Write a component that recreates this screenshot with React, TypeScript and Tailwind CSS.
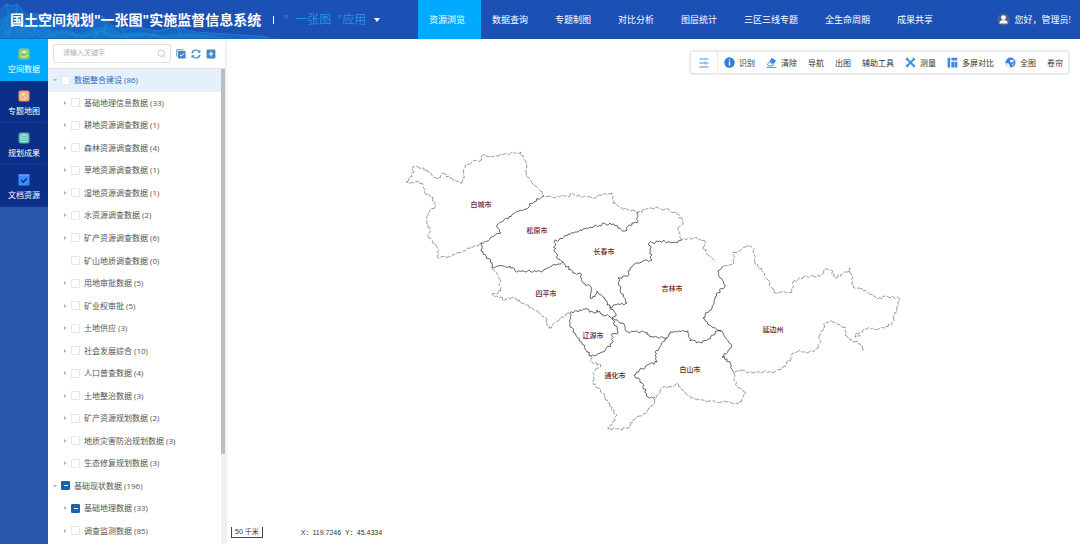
import { useState } from "react";

type TNode = {
  name: string;
  count: number;
  level: 0 | 1;
  leaf?: boolean;
  open?: boolean;
  partial?: boolean;
};

type TPoint = [number, number];

const navItems = [
  "资源浏览",
  "数据查询",
  "专题制图",
  "对比分析",
  "图层统计",
  "三区三线专题",
  "全生命周期",
  "成果共享",
];

const treeNodes: TNode[] = [
  { name: "数据整合建设", count: 86, level: 0, open: true },
  { name: "基础地理信息数据", count: 33, level: 1 },
  { name: "耕地资源调查数据", count: 1, level: 1 },
  { name: "森林资源调查数据", count: 4, level: 1 },
  { name: "草地资源调查数据", count: 1, level: 1 },
  { name: "湿地资源调查数据", count: 1, level: 1 },
  { name: "水资源调查数据", count: 2, level: 1 },
  { name: "矿产资源调查数据", count: 6, level: 1 },
  { name: "矿山地质调查数据", count: 0, level: 1, leaf: true },
  { name: "用地审批数据", count: 5, level: 1 },
  { name: "矿业权审批", count: 5, level: 1 },
  { name: "土地供应", count: 3, level: 1 },
  { name: "社会发展综合", count: 10, level: 1 },
  { name: "人口普查数据", count: 4, level: 1 },
  { name: "土地整治数据", count: 3, level: 1 },
  { name: "矿产资源规划数据", count: 2, level: 1 },
  { name: "地质灾害防治规划数据", count: 3, level: 1 },
  { name: "生态修复规划数据", count: 3, level: 1 },
  { name: "基础现状数据", count: 196, level: 0, open: true, partial: true },
  { name: "基础地理数据", count: 33, level: 1, partial: true },
  { name: "调查监测数据", count: 85, level: 1 },
];

// province outline, drawn light
const outerLines = [
  "406,182 410,177 414,172 412,168 415,167 422,168 428,172 437,179 440,178 443,173 450,178 462,183 464,173 465,165 472,162 480,161 483,155 497,156 510,154 521,152 523,158 527,167 526,175 533,184 543,192 544,196 552,197 558,196 568,197 572,193 577,196 587,197 597,198 599,195 612,193 613,203 622,208 637,212 645,210 657,207 670,211 678,214 683,223 678,230 681,239 693,238 705,240 706,243 703,247 708,255 715,262",
  "722,267 734,263 733,252 740,251 748,245 753,248 755,262 763,272 768,280 774,293 792,292 793,282 803,277 820,276 825,269 831,270 835,278 847,272 850,268 853,287 867,292 878,299 887,296 899,298 897,308 892,323 885,328 867,329 855,334 855,337 861,336",
  "864,350 860,344 852,340 845,335 845,327 833,322 826,322 821,333 818,348 808,353 800,350 793,353 791,359 782,368 774,372 755,372 733,371",
  "733,371 737,386 746,393 743,398 738,404 727,402 710,401 693,398 685,393 677,383 672,387 663,387 657,395 653,405 643,415 633,420 628,428 620,429 608,429",
  "481,243 463,251 450,257 438,258 437,247 429,238 430,230 427,222 428,213 435,207 433,197 425,193 422,183 412,182 406,182",
  "492,267 500,280 501,291 492,294 505,300 513,297 520,302 533,309 545,317 549,328 560,319 570,313",
  "591,356 592,362 601,365 594,372 593,382 602,393 610,407 617,415 608,429",
];

// borders between the cities, drawn dark
const innerLines = [
  "544,196 529,204 529,207 520,210 497,225 501,233 481,243 481,251 492,263 492,267",
  "492,267 510,266 515,271 543,271 552,266 563,262",
  "563,262 558,259 555,252 554,242 568,234 577,232 590,227 610,223 625,231 632,223 637,223 637,212",
  "563,262 573,273 580,273 583,283 591,287 590,298 595,297 597,291 605,300 610,307",
  "610,307 627,303 620,290 618,278 628,276 630,268 638,263 652,260 649,243 660,241 677,243 682,240",
  "610,307 616,316 612,318 622,323 628,332 647,332 650,337 667,338 670,332 688,331 690,341 702,343 708,339 717,331 721,331",
  "570,313 573,313 585,309 595,313 597,310 602,314 610,317 613,320 618,333 612,334 612,343 603,352 591,356 587,352 582,343 575,333 570,327 570,313",
  "667,338 655,352 657,362 647,365 634,375 642,383 648,397 655,397",
  "722,267 718,272 725,285 715,297 712,308 703,318 710,325 722,331 732,347 722,357 727,359 733,371",
];

const cities = [
  { name: "白城市", x: 481, y: 204 },
  { name: "松原市", x: 537, y: 230 },
  { name: "长春市", x: 604, y: 251 },
  { name: "吉林市", x: 672, y: 288 },
  { name: "四平市", x: 546, y: 293 },
  { name: "延边州", x: 773, y: 329 },
  { name: "辽源市", x: 593, y: 335 },
  { name: "通化市", x: 615, y: 375 },
  { name: "白山市", x: 690, y: 369 },
];

// splits each segment and shifts the points a little so borders look surveyed
const roughen = (line: string) => {
  const points = line.split(" ").map((p) => p.split(",").map(Number) as TPoint);
  let path = `M${points[0].join(" ")}`;
  for (let i = 1; i < points.length; i++) {
    const [x1, y1] = points[i - 1];
    const [x2, y2] = points[i];
    const length = Math.hypot(x2 - x1, y2 - y1);
    const steps = Math.max(1, Math.round(length / 1.8));
    for (let s = 1; s < steps; s++) {
      const t = s / steps;
      const noise = Math.sin(x1 * 12.9 + y1 * 78.2 + s * 137.7) * 43758.5;
      const shift = (noise - Math.floor(noise) - 0.5) * 2.8;
      const x = x1 + (x2 - x1) * t - ((y2 - y1) / length) * shift;
      const y = y1 + (y2 - y1) * t + ((x2 - x1) / length) * shift;
      path += `L${x.toFixed(1)} ${y.toFixed(1)}`;
    }
    path += `L${x2} ${y2}`;
  }
  return path;
};

const ProvinceMap = () => (
  <svg viewBox="225 39 855 505" className="absolute inset-0 h-full w-full">
    <g fill="none" stroke="#55555f" strokeWidth="0.6" strokeDasharray="6 1 4 1.5">
      {outerLines.map((line) => (
        <path key={line} d={roughen(line)} />
      ))}
    </g>
    <g fill="none" stroke="#222" strokeWidth="0.7">
      {innerLines.map((line) => (
        <path key={line} d={roughen(line)} />
      ))}
    </g>
    <g fill="#6b1c1c" fontSize="7" fontWeight="500" textAnchor="middle">
      {cities.map((city) => (
        <text key={city.name} x={city.x} y={city.y + 3}>
          {city.name}
        </text>
      ))}
    </g>
  </svg>
);

const Mountains = () => (
  <svg
    viewBox="0 0 280 39"
    preserveAspectRatio="none"
    className="absolute left-0 top-0 h-full w-[280px]"
    fill="none"
  >
    <path d="M0 10L6 4L12 6L17 4L23 11L29 16L35 13L42 17L48 15L54 22L62 26L72 22L84 27L94 20L102 16L110 24L122 29L140 27L156 31L176 27L196 32L226 34L268 37L280 39H0Z" fill="#1467c4" />
    <path d="M0 20L8 14L15 20L22 17L30 27L42 23L52 31L66 29L78 34L96 28L108 25L120 33L142 32L164 35L190 33L232 38H0Z" fill="#1478cf" />
    <g stroke="#2e9be0" strokeWidth="0.7" opacity="0.7">
      <path d="M0 10L6 4L12 6L17 4L23 11L29 16L35 13L42 17L48 15L54 22L62 26L72 22L84 27L94 20L102 16L110 24L122 29L140 27L156 31L176 27L196 32L226 34L268 37" />
      <path d="M6 4L9 15L5 22L11 31L8 38M17 4L16 13L22 20L20 30L27 38M35 13L38 22L34 30L41 38M48 15L51 25L48 33L56 38M72 22L70 29L77 38M94 20L92 27L97 32L95 38M102 16L106 26L104 32L111 38M122 29L127 38M156 31L151 38M176 27L181 34L178 38" />
      <path d="M0 29L4 26L7 34L14 25L19 35L25 27L32 36L38 31L46 37L62 32L84 37L101 31L118 37L146 34L168 38" />
    </g>
  </svg>
);

const SpaceIcon = () => (
  <svg viewBox="0 0 12 12" className="size-3">
    <rect x="0.5" y="0.5" width="11" height="11" rx="2" fill="#8cc97b" />
    <path d="M2.5 4L6 2.5L9.5 4L6 5.5Z" fill="#e8f3a8" />
    <path d="M2.5 6L5 7.5L9.5 5.5V8.5L6 10L2.5 8.5Z" fill="#d5e77d" />
    <path d="M3 8L5 6.5L6.5 8L9 6" stroke="#4e9d62" strokeWidth="0.8" fill="none" />
  </svg>
);

const ThemeIcon = () => (
  <svg viewBox="0 0 12 12" className="size-3">
    <rect x="0.5" y="0.5" width="11" height="11" rx="2" fill="#efa16c" />
    <circle cx="6" cy="6.2" r="3.4" fill="none" stroke="#ffe6cf" />
    <path d="M4 3L6 6.5L8 8M6 6.5V3.5" stroke="#fff1e4" fill="none" />
  </svg>
);

const ResultIcon = () => (
  <svg viewBox="0 0 12 12" className="size-3">
    <rect x="0.5" y="0.5" width="11" height="11" rx="2.5" fill="#57b9ad" />
    <rect x="3" y="3" width="6" height="6.5" rx="1" fill="none" stroke="#d5f3ec" strokeWidth="0.9" />
    <path d="M4.5 2.5H7.5M4.3 5.3H7.7M4.3 7.3H7.7" stroke="#d5f3ec" strokeWidth="0.9" />
  </svg>
);

const DocIcon = () => (
  <svg viewBox="0 0 12 12" className="size-3">
    <rect x="0.5" y="0.5" width="11" height="11" rx="0.5" fill="#3b8cf5" />
    <path d="M0.5 1H11.5" stroke="#79b3ff" />
    <path d="M3 6L5.3 8.3L9 4.3" stroke="#0c2d80" strokeWidth="1.3" fill="none" />
  </svg>
);

const sideItems = [
  { name: "空间数据", icon: <SpaceIcon /> },
  { name: "专题地图", icon: <ThemeIcon /> },
  { name: "规划成果", icon: <ResultIcon /> },
  { name: "文档资源", icon: <DocIcon /> },
];

const InfoIcon = () => (
  <svg viewBox="0 0 11 11" className="size-[11px]">
    <circle cx="5.5" cy="5.5" r="5.2" fill="#2f7fd6" />
    <path d="M5.5 4.6V8.4M5.5 2.3V3.6" stroke="#fff" strokeWidth="1.3" />
  </svg>
);

const EraserIcon = () => (
  <svg viewBox="0 0 11 11" className="size-[11px]">
    <path d="M5.6 0.8L10 3.6L7.8 7L3.6 4.2Z" fill="#3d87d8" />
    <path d="M3.3 4.8L7.3 7.5L6.4 8.9H3L1.3 7.7Z" fill="none" stroke="#3d87d8" strokeWidth="0.9" />
    <path d="M0.3 10.4H10.5" stroke="#3d87d8" strokeWidth="0.9" />
  </svg>
);

const MeasureIcon = () => (
  <svg viewBox="0 0 11 11" className="size-[11px]" fill="none" stroke="#4490e0">
    <path d="M1.8 1.8L9.2 9.2M9.2 1.8L1.8 9.2" strokeWidth="2" />
    <path d="M0.8 3L3 0.8M8 0.8L10.2 3M0.8 8L3 10.2M8 10.2L10.2 8" strokeWidth="1.3" />
  </svg>
);

const SplitIcon = () => (
  <svg viewBox="0 0 11 11" className="size-[11px]" fill="#3b86de">
    <path d="M0.6 0.8H3.2V10.4H0.6ZM4.4 0.8H10.3V3.6H4.4ZM4.4 4.8H10.3V10.4H4.4Z" />
    <path d="M7.4 4.8V10.4" stroke="#fff" strokeWidth="0.5" />
  </svg>
);

const GlobeIcon = () => (
  <svg viewBox="0 0 11 11" className="size-[11px]">
    <circle cx="5.5" cy="5.5" r="5" fill="#3b86de" />
    <path d="M4.8 3.4L8.8 2.6L8.2 5L5.6 5.6ZM0.6 6.2L3.8 6.4L5.4 10.2L2.8 9.8Z" fill="#fff" />
    <path d="M6.6 7L9.3 6.2L7.8 8.8Z" fill="#bcd9f8" />
  </svg>
);

const tools = [
  { name: "识别", icon: <InfoIcon /> },
  { name: "清除", icon: <EraserIcon /> },
  { name: "导航" },
  { name: "出图" },
  { name: "辅助工具" },
  { name: "测量", icon: <MeasureIcon /> },
  { name: "多屏对比", icon: <SplitIcon /> },
  { name: "全图", icon: <GlobeIcon /> },
  { name: "卷帘" },
];

const Header = () => {
  const [active, setActive] = useState("资源浏览");

  return (
    <header className="relative flex h-[39px] shrink-0 items-center bg-[#1b50b5] text-white">
      <Mountains />
      <div className="relative flex w-[418px] shrink-0 items-center whitespace-nowrap pl-[10px]">
        <h1 className="text-[14px] font-bold leading-5">国土空间规划"一张图"实施监督信息系统</h1>
        <span className="ml-3 h-2 w-px bg-white" />
        <button className="ml-[10px] flex items-center gap-2 text-[12px] leading-5 text-[#2590ea]">
          <span className="whitespace-pre">"  一张图  "应用</span>
          <span className="border-x-[3px] border-t-4 border-x-transparent border-t-white" />
        </button>
      </div>
      <nav className="flex h-full whitespace-nowrap">
        {navItems.map((item) => (
          <button
            key={item}
            onClick={() => setActive(item)}
            className={`h-full pl-[11px] pr-4 text-[9px] ${active === item ? "bg-[#00aaff]" : ""}`}
          >
            {item}
          </button>
        ))}
      </nav>
      <div className="ml-auto flex items-center gap-[5px] whitespace-nowrap pr-[9px] text-[9px]">
        <svg viewBox="0 0 13 13" className="size-[13px]">
          <circle cx="6.5" cy="6.5" r="6.3" fill="#4b6290" />
          <circle cx="6.5" cy="4.6" r="2.4" fill="#fff" />
          <path d="M2.4 10.4C2.4 7.6 4.3 7.2 6.5 7.2S10.6 7.6 10.6 10.4Z" fill="#fff" />
        </svg>
        <span>您好，管理员!</span>
      </div>
    </header>
  );
};

const SideMenu = () => {
  const [active, setActive] = useState("空间数据");

  return (
    <aside className="w-12 shrink-0 bg-[#2a56ae] text-white">
      {sideItems.map((item) => (
        <button
          key={item.name}
          onClick={() => setActive(item.name)}
          className={`flex h-[42px] w-full flex-col items-center justify-center gap-1 pt-[2px] text-[8px] leading-[10px] ${
            active === item.name ? "bg-[#00aaff]" : "border-b border-[#12398f] bg-[#0b2f88]"
          }`}
        >
          {item.icon}
          {item.name}
        </button>
      ))}
    </aside>
  );
};

const TreeRow = ({ node, selected }: { node: TNode; selected: boolean }) => (
  <li
    className={`flex min-h-[22px] flex-1 items-center text-[8px] ${
      node.level === 0 ? "pl-[5px]" : "pl-[15px]"
    } ${selected ? "bg-[#e6effc] text-[#2a6cb5]" : "text-[#555]"}`}
  >
    <span className="flex w-2 shrink-0 items-center">
      {!node.leaf && (
        <svg viewBox="0 0 4 4" className="size-1" fill="#b5b5b5">
          <path d={node.open ? "M0 1H4L2 3.5Z" : "M1 0L3.5 2L1 4Z"} />
        </svg>
      )}
    </span>
    <label className="flex items-center gap-1 whitespace-nowrap">
      <input
        type="checkbox"
        defaultChecked={node.partial}
        className="flex size-[9px] appearance-none items-center justify-center rounded-[1px] border border-[#e6e6e6] bg-white checked:border-[#1763ac] checked:bg-[#1763ac] checked:after:h-px checked:after:w-1 checked:after:bg-white checked:after:content-['']"
      />
      <span>
        {node.name} ({node.count})
      </span>
    </label>
  </li>
);

const LayerPanel = () => (
  <section className="z-10 flex w-[177px] shrink-0 flex-col bg-white shadow-[1px_0_3px_rgba(0,0,0,0.12)]">
    <div className="flex h-[30px] shrink-0 items-center gap-[5px] border-b border-[#e4e4e4] pl-[5px] pr-[9px]">
      <label className="flex h-[19px] min-w-0 flex-1 items-center rounded-xs border border-[#e2e2e2] pl-[9px] pr-1">
        <input
          type="text"
          aria-label="请输入关键字"
          placeholder="请输入关键字"
          className="min-w-0 flex-1 text-[7px] outline-none placeholder:text-[#b0b0b0]"
        />
        <svg viewBox="0 0 9 9" className="size-[9px]" fill="none" stroke="#bbb" strokeWidth="0.8">
          <circle cx="4.2" cy="4.2" r="3.2" />
          <path d="M6.5 6.5L8.3 8.3" />
        </svg>
      </label>
      <button aria-label="全选">
        <svg viewBox="0 0 10 10" className="size-[10px]">
          <path d="M0.8 7.6V0.8H7.6" stroke="#3c87c8" strokeWidth="0.9" fill="none" />
          <rect x="2" y="2" width="7.6" height="7.6" rx="0.8" fill="#3c87c8" />
          <path d="M3.8 5.8L5.3 7.2L7.8 4.5" stroke="#fff" fill="none" />
        </svg>
      </button>
      <button aria-label="刷新">
        <svg viewBox="0 0 10 10" className="size-[10px]" fill="none" stroke="#3c87c8" strokeWidth="1.2">
          <path d="M1 4.3A4 4 0 0 1 8.4 3M9 5.7A4 4 0 0 1 1.6 7" />
          <path d="M9.4 0.8V3.8H6.4ZM0.6 9.2V6.2H3.6Z" fill="#3c87c8" stroke="none" />
        </svg>
      </button>
      <button aria-label="添加">
        <svg viewBox="0 0 10 10" className="size-[10px]">
          <rect x="0.6" y="0.6" width="8.8" height="8.8" rx="0.8" fill="#3c87c8" />
          <path d="M5 2.6V7.4M2.6 5H7.4" stroke="#fff" strokeWidth="1.1" />
        </svg>
      </button>
    </div>
    <div className="flex min-h-0 flex-1">
      <ul className="flex min-w-0 flex-1 flex-col overflow-hidden pb-[2px]">
        {treeNodes.map((node, index) => (
          <TreeRow key={node.name} node={node} selected={index === 0} />
        ))}
      </ul>
      <div className="w-1 bg-[#f1f1f1]">
        <div className="h-[81%] bg-[#bdbdbd]" />
      </div>
    </div>
  </section>
);

const Toolbar = () => (
  <div className="relative mr-[11px] mt-3 flex h-[23px] items-center self-end whitespace-nowrap rounded-xs border border-[#e6e6e6] bg-white pr-[5px] text-[8px] text-[#333] shadow-[0_0_3px_rgba(0,0,0,0.15)]">
    <button aria-label="收起" className="flex h-full w-[27px] items-center justify-center border-r border-[#ececec]">
      <svg viewBox="0 0 10 10" className="size-[10px]" stroke="#4a90d9" fill="none">
        <path d="M0.5 1H9.5M0.5 5H5M0.5 9H9.5" />
        <path d="M5.5 5H9.5M7 3.4L5.4 5L7 6.6" />
      </svg>
    </button>
    <div className="flex items-center gap-[11px] pl-[6px]">
      {tools.map((tool) => (
        <button key={tool.name} className="flex items-center gap-1">
          {tool.icon}
          {tool.name}
        </button>
      ))}
    </div>
  </div>
);

const App = () => {
  return (
    <div className="flex h-screen flex-col overflow-hidden bg-white font-['Open_Sans','Noto_Sans_CJK_SC',sans-serif]">
      <Header />
      <div className="flex min-h-0 flex-1">
        <SideMenu />
        <LayerPanel />
        <main className="relative flex min-w-0 flex-1 flex-col">
          <ProvinceMap />
          <Toolbar />
          <div className="relative mt-auto flex items-center gap-[38px] pb-[6px] pl-[6px] font-['Liberation_Sans','Noto_Sans_CJK_SC',sans-serif] text-[7px] leading-[10px] text-[#333]">
            <span className="border-x border-b border-[#444] px-[3px]">50 千米</span>
            <span className="flex gap-1">
              <span>X：119.7246</span>
              <span>Y：45.4334</span>
            </span>
          </div>
        </main>
      </div>
    </div>
  );
};

export default App;
